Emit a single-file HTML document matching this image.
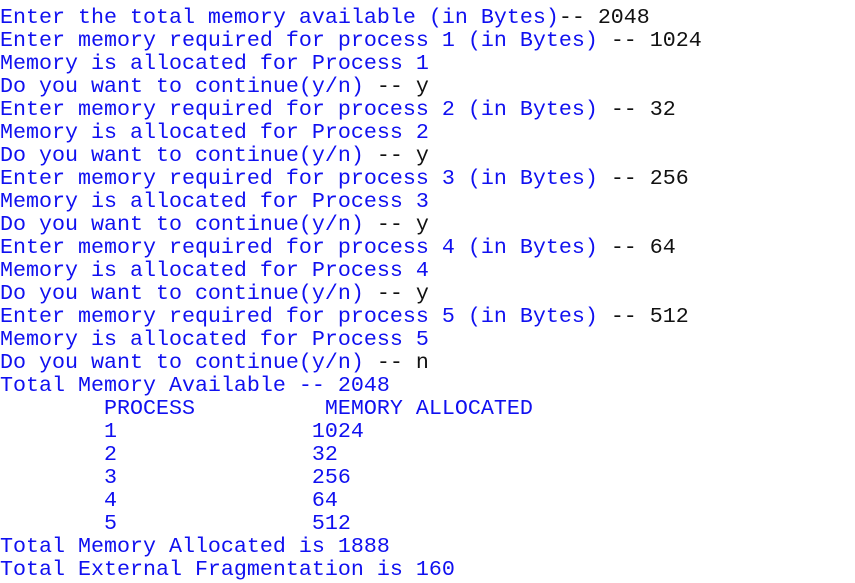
<!DOCTYPE html>
<html><head><meta charset="utf-8"><style>
html,body{margin:0;padding:0;background:#fff;width:855px;height:583px;overflow:hidden}
pre{margin:0;padding-top:6px;font-family:"Liberation Mono","Courier New",monospace;font-size:21.67px;line-height:23px;color:#1010f0}
b{font-weight:normal;color:#111}
</style></head><body><pre>Enter the total memory available (in Bytes)<b>-- 2048</b>
Enter memory required for process 1 (in Bytes) <b>-- 1024</b>
Memory is allocated for Process 1
Do you want to continue(y/n) <b>-- y</b>
Enter memory required for process 2 (in Bytes) <b>-- 32</b>
Memory is allocated for Process 2
Do you want to continue(y/n) <b>-- y</b>
Enter memory required for process 3 (in Bytes) <b>-- 256</b>
Memory is allocated for Process 3
Do you want to continue(y/n) <b>-- y</b>
Enter memory required for process 4 (in Bytes) <b>-- 64</b>
Memory is allocated for Process 4
Do you want to continue(y/n) <b>-- y</b>
Enter memory required for process 5 (in Bytes) <b>-- 512</b>
Memory is allocated for Process 5
Do you want to continue(y/n) <b>-- n</b>
Total Memory Available -- 2048
        PROCESS          MEMORY ALLOCATED
        1               1024
        2               32
        3               256
        4               64
        5               512
Total Memory Allocated is 1888
Total External Fragmentation is 160</pre></body></html>
